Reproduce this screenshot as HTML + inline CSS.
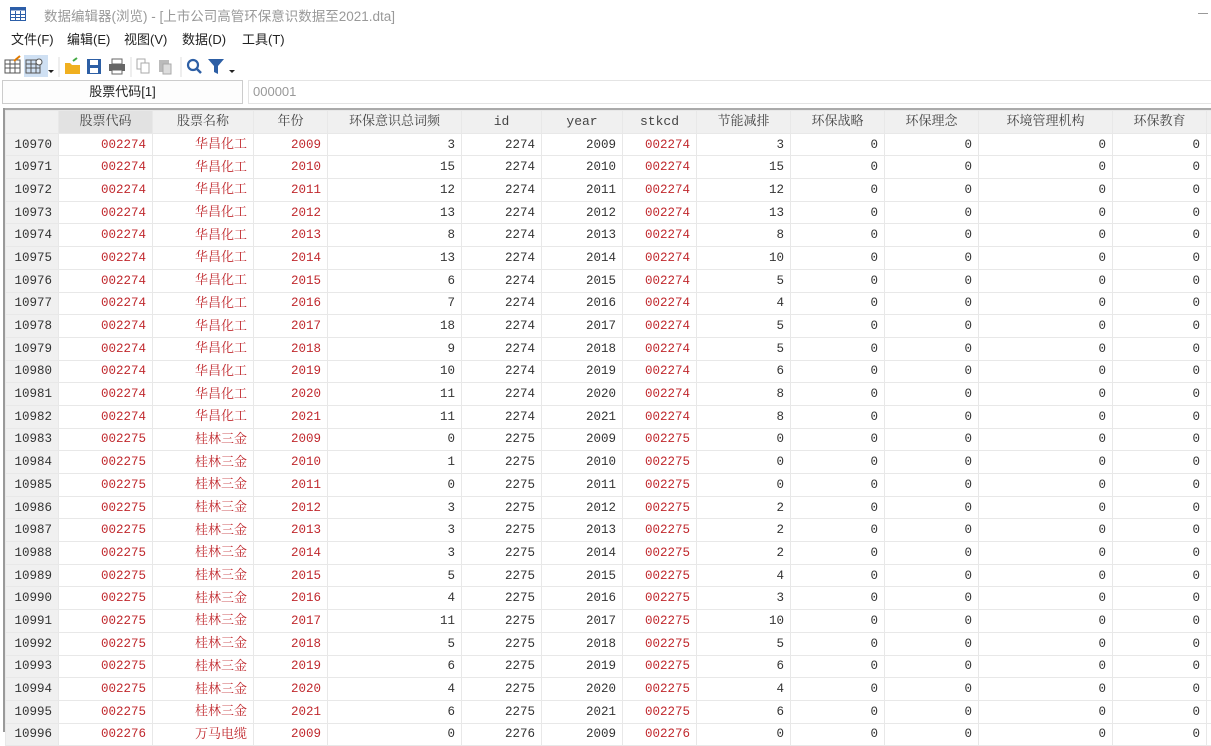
<!DOCTYPE html>
<html><head><meta charset="utf-8"><style>
*{margin:0;padding:0;box-sizing:border-box}
body{width:1211px;height:732px;overflow:hidden;background:#fff;font-family:"Liberation Sans","Noto Sans CJK SC",sans-serif;position:relative}
.title{position:absolute;left:44px;top:5px;font-size:13.5px;color:#999}
.menu{position:absolute;top:29px;font-size:13px;color:#222}
.tb{position:absolute;top:55px;height:24px}
.vb{position:absolute;left:2px;top:80px;width:241px;height:24px;border:1px solid #ccc;background:#fdfdfd;font-size:13px;text-align:center;line-height:22px;color:#222}
.vv{position:absolute;left:248px;top:80px;width:963px;height:24px;border:1px solid #e4e4e4;border-right:none;font-size:13px;line-height:22px;padding-left:4px;color:#999}
table{position:absolute;left:5px;top:110px;border-collapse:collapse;table-layout:fixed;width:1211px}
td,th{height:22.7px;border:1px solid #e8e8e8;padding:0 6px;white-space:nowrap;overflow:hidden;line-height:18px;vertical-align:middle}
th{background:#f0f0f0;font-family:"Liberation Mono","Noto Serif CJK SC",serif;font-weight:normal;font-size:13px;color:#444;text-align:center}
td{font-family:"Liberation Mono","Noto Serif CJK SC",monospace;font-size:12.5px;text-align:right;color:#333}
td.r{color:#c0282d}
td.h{background:#f0f0f0;color:#333;text-align:right}
td.n{font-family:"Noto Serif CJK SC",serif;color:#c0282d;font-size:13px;line-height:14px;padding-bottom:3px}
.gl{position:absolute;left:3px;top:108px;width:2px;height:624px;background:#999}
.gt{position:absolute;left:3px;top:108px;width:1208px;height:2px;background:#aaa}
</style></head><body>
<svg style="position:absolute;left:10px;top:7px" width="16" height="14"><rect x="0.5" y="0.5" width="15" height="13" fill="none" stroke="#2c5ea8"/><rect x="0.5" y="0.5" width="15" height="3" fill="#2c5ea8"/><path d="M0 7.5H16M0 10.5H16M5.5 4V14M10.5 4V14" stroke="#2c5ea8"/></svg>
<div class="title">数据编辑器(浏览) - [上市公司高管环保意识数据至2021.dta]</div>
<div style="position:absolute;left:1198px;top:13px;width:10px;height:1px;background:#999"></div>
<div class="menu" style="left:11px">文件(F)</div>
<div class="menu" style="left:67px">编辑(E)</div>
<div class="menu" style="left:124px">视图(V)</div>
<div class="menu" style="left:182px">数据(D)</div>
<div class="menu" style="left:242px">工具(T)</div>
<svg class="tb" style="left:0" width="245" height="24">
<rect x="5" y="5" width="15" height="13" fill="none" stroke="#555"/><path d="M5 9H20M5 13H20M10 5V18M15 5V18" stroke="#555"/><path d="M14 6L20 1" stroke="#e07a00" stroke-width="2"/>
<rect x="24" y="0" width="24" height="22" fill="#cfe0f3"/><rect x="26" y="5" width="14" height="13" fill="none" stroke="#555"/><path d="M26 9H40M26 13H40M31 5V18M36 5V18" stroke="#555"/><circle cx="39" cy="7" r="3" fill="#fff" stroke="#555"/>
<path d="M48 15h6l-3 3z" fill="#222"/>
<path d="M65 8h5l2 2h8v9h-15z" fill="#f0b020"/><path d="M73 6l4-3" stroke="#4a4" stroke-width="2"/>
<rect x="87" y="4" width="14" height="15" fill="#2d5fa5"/><rect x="90" y="5" width="8" height="5" fill="#fff"/><rect x="90" y="13" width="8" height="5" fill="#fff"/>
<rect x="109" y="9" width="16" height="7" fill="#666"/><rect x="112" y="4" width="10" height="5" fill="#fff" stroke="#666"/><rect x="112" y="15" width="10" height="4" fill="#fff" stroke="#666"/>
<rect x="137" y="4" width="8" height="10" fill="#fff" stroke="#aaa"/><rect x="141" y="8" width="8" height="10" fill="#fff" stroke="#aaa"/>
<rect x="159" y="5" width="10" height="12" fill="#bbb"/><rect x="163" y="9" width="8" height="10" fill="#ddd" stroke="#aaa"/>
<circle cx="193" cy="10" r="5" fill="none" stroke="#2d5fa5" stroke-width="2.2"/><path d="M197 14l4 4" stroke="#2d5fa5" stroke-width="2.5"/>
<path d="M208 4h16l-6 7v8l-4-2v-6z" fill="#2d5fa5"/><path d="M229 15h6l-3 3z" fill="#222"/>
<path d="M59 2v20M131 2v20M181 2v20" stroke="#ddd"/>
</svg>
<div class="vb">股票代码[1]</div>
<div class="vv">000001</div>
<div class="gt"></div><div class="gl"></div>
<table>
<colgroup><col style="width:53px"><col style="width:94px"><col style="width:101px"><col style="width:74px"><col style="width:134px"><col style="width:80px"><col style="width:81px"><col style="width:74px"><col style="width:94px"><col style="width:94px"><col style="width:94px"><col style="width:134px"><col style="width:94px"><col style="width:10px"></colgroup>
<tr><th></th><th style="background:#e2e2e2">股票代码</th><th>股票名称</th><th>年份</th><th>环保意识总词频</th><th>id</th><th>year</th><th>stkcd</th><th>节能减排</th><th>环保战略</th><th>环保理念</th><th>环境管理机构</th><th>环保教育</th><th></th></tr>
<tr><td class="h">10970</td><td class="r">002274</td><td class="n">华昌化工</td><td class="r">2009</td><td>3</td><td>2274</td><td>2009</td><td class="r">002274</td><td>3</td><td>0</td><td>0</td><td>0</td><td>0</td><td></td></tr>
<tr><td class="h">10971</td><td class="r">002274</td><td class="n">华昌化工</td><td class="r">2010</td><td>15</td><td>2274</td><td>2010</td><td class="r">002274</td><td>15</td><td>0</td><td>0</td><td>0</td><td>0</td><td></td></tr>
<tr><td class="h">10972</td><td class="r">002274</td><td class="n">华昌化工</td><td class="r">2011</td><td>12</td><td>2274</td><td>2011</td><td class="r">002274</td><td>12</td><td>0</td><td>0</td><td>0</td><td>0</td><td></td></tr>
<tr><td class="h">10973</td><td class="r">002274</td><td class="n">华昌化工</td><td class="r">2012</td><td>13</td><td>2274</td><td>2012</td><td class="r">002274</td><td>13</td><td>0</td><td>0</td><td>0</td><td>0</td><td></td></tr>
<tr><td class="h">10974</td><td class="r">002274</td><td class="n">华昌化工</td><td class="r">2013</td><td>8</td><td>2274</td><td>2013</td><td class="r">002274</td><td>8</td><td>0</td><td>0</td><td>0</td><td>0</td><td></td></tr>
<tr><td class="h">10975</td><td class="r">002274</td><td class="n">华昌化工</td><td class="r">2014</td><td>13</td><td>2274</td><td>2014</td><td class="r">002274</td><td>10</td><td>0</td><td>0</td><td>0</td><td>0</td><td></td></tr>
<tr><td class="h">10976</td><td class="r">002274</td><td class="n">华昌化工</td><td class="r">2015</td><td>6</td><td>2274</td><td>2015</td><td class="r">002274</td><td>5</td><td>0</td><td>0</td><td>0</td><td>0</td><td></td></tr>
<tr><td class="h">10977</td><td class="r">002274</td><td class="n">华昌化工</td><td class="r">2016</td><td>7</td><td>2274</td><td>2016</td><td class="r">002274</td><td>4</td><td>0</td><td>0</td><td>0</td><td>0</td><td></td></tr>
<tr><td class="h">10978</td><td class="r">002274</td><td class="n">华昌化工</td><td class="r">2017</td><td>18</td><td>2274</td><td>2017</td><td class="r">002274</td><td>5</td><td>0</td><td>0</td><td>0</td><td>0</td><td></td></tr>
<tr><td class="h">10979</td><td class="r">002274</td><td class="n">华昌化工</td><td class="r">2018</td><td>9</td><td>2274</td><td>2018</td><td class="r">002274</td><td>5</td><td>0</td><td>0</td><td>0</td><td>0</td><td></td></tr>
<tr><td class="h">10980</td><td class="r">002274</td><td class="n">华昌化工</td><td class="r">2019</td><td>10</td><td>2274</td><td>2019</td><td class="r">002274</td><td>6</td><td>0</td><td>0</td><td>0</td><td>0</td><td></td></tr>
<tr><td class="h">10981</td><td class="r">002274</td><td class="n">华昌化工</td><td class="r">2020</td><td>11</td><td>2274</td><td>2020</td><td class="r">002274</td><td>8</td><td>0</td><td>0</td><td>0</td><td>0</td><td></td></tr>
<tr><td class="h">10982</td><td class="r">002274</td><td class="n">华昌化工</td><td class="r">2021</td><td>11</td><td>2274</td><td>2021</td><td class="r">002274</td><td>8</td><td>0</td><td>0</td><td>0</td><td>0</td><td></td></tr>
<tr><td class="h">10983</td><td class="r">002275</td><td class="n">桂林三金</td><td class="r">2009</td><td>0</td><td>2275</td><td>2009</td><td class="r">002275</td><td>0</td><td>0</td><td>0</td><td>0</td><td>0</td><td></td></tr>
<tr><td class="h">10984</td><td class="r">002275</td><td class="n">桂林三金</td><td class="r">2010</td><td>1</td><td>2275</td><td>2010</td><td class="r">002275</td><td>0</td><td>0</td><td>0</td><td>0</td><td>0</td><td></td></tr>
<tr><td class="h">10985</td><td class="r">002275</td><td class="n">桂林三金</td><td class="r">2011</td><td>0</td><td>2275</td><td>2011</td><td class="r">002275</td><td>0</td><td>0</td><td>0</td><td>0</td><td>0</td><td></td></tr>
<tr><td class="h">10986</td><td class="r">002275</td><td class="n">桂林三金</td><td class="r">2012</td><td>3</td><td>2275</td><td>2012</td><td class="r">002275</td><td>2</td><td>0</td><td>0</td><td>0</td><td>0</td><td></td></tr>
<tr><td class="h">10987</td><td class="r">002275</td><td class="n">桂林三金</td><td class="r">2013</td><td>3</td><td>2275</td><td>2013</td><td class="r">002275</td><td>2</td><td>0</td><td>0</td><td>0</td><td>0</td><td></td></tr>
<tr><td class="h">10988</td><td class="r">002275</td><td class="n">桂林三金</td><td class="r">2014</td><td>3</td><td>2275</td><td>2014</td><td class="r">002275</td><td>2</td><td>0</td><td>0</td><td>0</td><td>0</td><td></td></tr>
<tr><td class="h">10989</td><td class="r">002275</td><td class="n">桂林三金</td><td class="r">2015</td><td>5</td><td>2275</td><td>2015</td><td class="r">002275</td><td>4</td><td>0</td><td>0</td><td>0</td><td>0</td><td></td></tr>
<tr><td class="h">10990</td><td class="r">002275</td><td class="n">桂林三金</td><td class="r">2016</td><td>4</td><td>2275</td><td>2016</td><td class="r">002275</td><td>3</td><td>0</td><td>0</td><td>0</td><td>0</td><td></td></tr>
<tr><td class="h">10991</td><td class="r">002275</td><td class="n">桂林三金</td><td class="r">2017</td><td>11</td><td>2275</td><td>2017</td><td class="r">002275</td><td>10</td><td>0</td><td>0</td><td>0</td><td>0</td><td></td></tr>
<tr><td class="h">10992</td><td class="r">002275</td><td class="n">桂林三金</td><td class="r">2018</td><td>5</td><td>2275</td><td>2018</td><td class="r">002275</td><td>5</td><td>0</td><td>0</td><td>0</td><td>0</td><td></td></tr>
<tr><td class="h">10993</td><td class="r">002275</td><td class="n">桂林三金</td><td class="r">2019</td><td>6</td><td>2275</td><td>2019</td><td class="r">002275</td><td>6</td><td>0</td><td>0</td><td>0</td><td>0</td><td></td></tr>
<tr><td class="h">10994</td><td class="r">002275</td><td class="n">桂林三金</td><td class="r">2020</td><td>4</td><td>2275</td><td>2020</td><td class="r">002275</td><td>4</td><td>0</td><td>0</td><td>0</td><td>0</td><td></td></tr>
<tr><td class="h">10995</td><td class="r">002275</td><td class="n">桂林三金</td><td class="r">2021</td><td>6</td><td>2275</td><td>2021</td><td class="r">002275</td><td>6</td><td>0</td><td>0</td><td>0</td><td>0</td><td></td></tr>
<tr><td class="h">10996</td><td class="r">002276</td><td class="n">万马电缆</td><td class="r">2009</td><td>0</td><td>2276</td><td>2009</td><td class="r">002276</td><td>0</td><td>0</td><td>0</td><td>0</td><td>0</td><td></td></tr>
</table>
</body></html>
